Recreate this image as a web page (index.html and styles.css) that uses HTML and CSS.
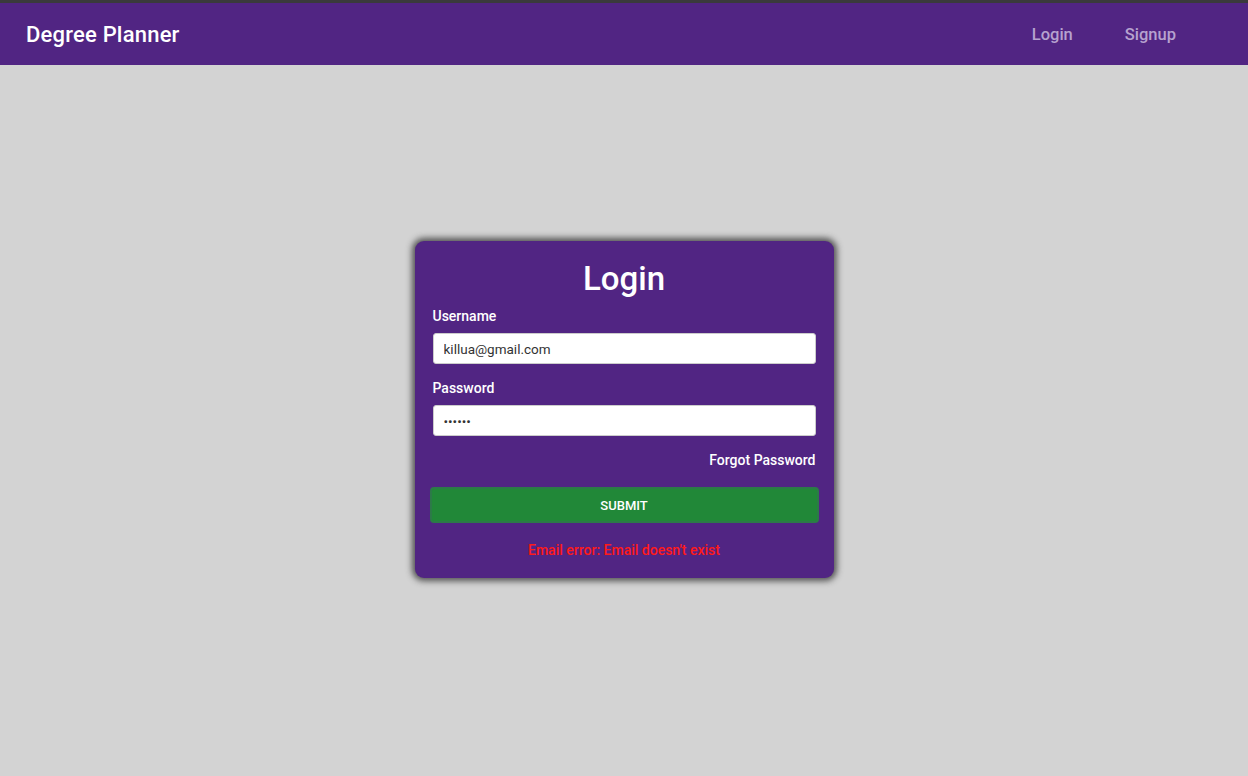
FILE: index.html
```html
<!DOCTYPE html>
<html lang="en">
<head>
<meta charset="utf-8">
<title>Degree Planner</title>
<link rel="stylesheet" href="styles.css">
</head>
<body>
<div class="topline"></div>
<header class="navbar">
  <div class="brand">Degree Planner</div>
  <nav class="links">
    <a href="#" class="nav-link">Login</a>
    <a href="#" class="nav-link">Signup</a>
  </nav>
</header>
<main class="main">
  <form class="card">
    <h1 class="title">Login</h1>
    <label class="label" for="u">Username</label>
    <input class="input" id="u" type="text" value="killua@gmail.com">
    <label class="label label-2" for="p">Password</label>
    <input class="input" id="p" type="password" value="secret">
    <div class="forgot-row"><a href="#" class="forgot">Forgot Password</a></div>
    <button type="button" class="submit">SUBMIT</button>
    <p class="error">Email error: Email doesn't exist</p>
  </form>
</main>
</body>
</html>
```
FILE: styles.css
```css
* { box-sizing: border-box; }
html, body { margin: 0; padding: 0; height: 100%; }
body {
  background: #d3d3d3;
  font-family: Roboto, "Noto Sans", sans-serif;
  display: flex;
  flex-direction: column;
}
.topline { height: 3px; background: #3a3a3c; }
.navbar {
  height: 62px;
  background: #512583;
  display: flex;
  align-items: center;
  justify-content: space-between;
  padding: 0 72px 0 26px;
}
.brand {
  color: #fff;
  font-size: 22px;
  font-weight: 500;
  letter-spacing: 0.2px;
}
.links { display: flex; gap: 52px; }
.nav-link {
  color: #b6a2cf;
  text-decoration: none;
  font-size: 16.5px;
  font-weight: 500;
}
.main {
  flex: 1;
  display: flex;
  justify-content: center;
  padding-top: 176px;
}
.card {
  width: 419px;
  height: 337px;
  background: #512583;
  border-radius: 9px;
  box-shadow: 0 0 6px 3px rgba(40, 40, 40, 0.75);
  padding: 16px 18px 0 18px;
  display: flex;
  flex-direction: column;
}
.title {
  margin: 0 0 7px;
  color: #fff;
  text-align: center;
  font-size: 33px;
  font-weight: 500;
  line-height: 44px;
}
.label {
  color: #fff;
  font-size: 14px;
  font-weight: 500;
  line-height: 16px;
  margin-bottom: 9px;
}
.label-2 { margin-top: 16px; }
.input {
  height: 31px;
  width: 100%;
  border: 1px solid #ccc;
  border-radius: 3px;
  background: #fff;
  padding: 0 10px;
  font-family: Roboto, "Noto Sans", sans-serif;
  font-size: 13.5px;
  color: #333;
  outline: none;
}
.forgot-row {
  display: flex;
  justify-content: flex-end;
  margin-top: 16px;
}
.forgot {
  color: #fff;
  text-decoration: none;
  font-size: 14px;
  font-weight: 500;
}
.submit {
  margin: 19px -3px 0;
  height: 36px;
  background: #218838;
  border: 2px solid #2c7a48;
  border-radius: 4px;
  color: #fff;
  font-family: Roboto, "Noto Sans", sans-serif;
  font-size: 13px;
  font-weight: 500;
}
.error {
  margin: 19px 0 0;
  text-align: center;
  color: #ff1a1a;
  font-size: 14px;
  font-weight: 500;
}
```
